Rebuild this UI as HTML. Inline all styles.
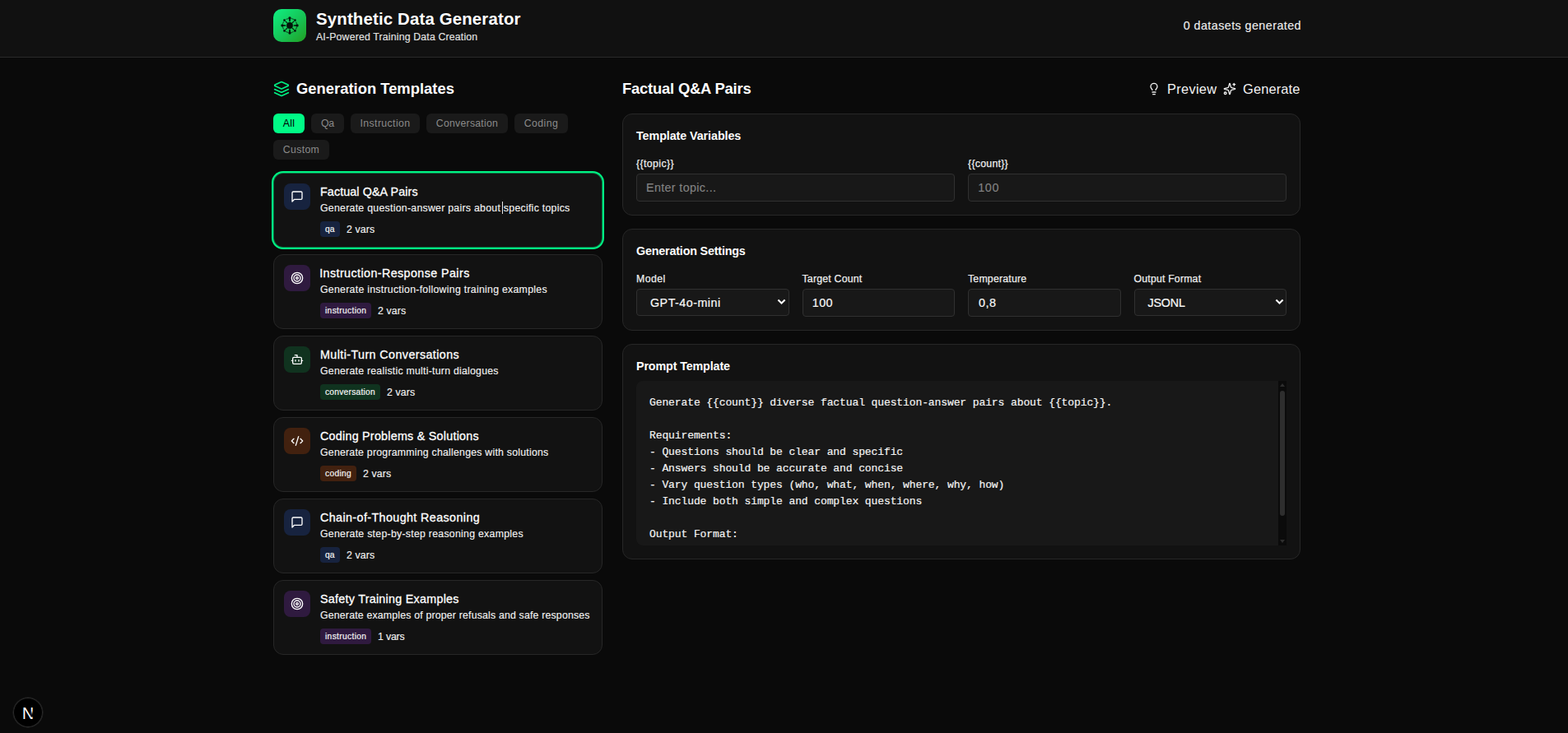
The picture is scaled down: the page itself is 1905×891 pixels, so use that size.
<!DOCTYPE html>
<html lang="en">
<head>
<meta charset="utf-8">
<title>Synthetic Data Generator</title>
<style>
*{box-sizing:border-box;margin:0;padding:0}
html,body{width:1905px;height:891px;overflow:hidden;background:#0a0a0a}
body{font-family:"Liberation Sans",Arial,sans-serif;color:#fff;position:relative;-webkit-font-smoothing:antialiased}
.abs{position:absolute}
span.t{display:inline-block;white-space:nowrap}
svg{display:block}
svg.ic{fill:none;stroke:currentColor;stroke-width:2;stroke-linecap:round;stroke-linejoin:round}

/* header */
#hdr{position:absolute;left:0;top:0;width:1905px;height:70px;background:#111111;border-bottom:1px solid #2a2a2a}
#logo{position:absolute;left:332px;top:11px;width:40px;height:40px;border-radius:10px;background:linear-gradient(135deg,#0ff083 0%,#16c456 55%,#229f22 100%)}
#logo svg{position:absolute;left:9px;top:9px}
#title{position:absolute;left:384px;top:9px;height:28px;line-height:28px;font-size:20.4px;font-weight:700}
#sub{position:absolute;left:384px;top:37px;height:16px;line-height:16px;font-size:12.3px;color:#e2e2e2;-webkit-text-stroke:0.15px #e2e2e2}
#cnt{position:absolute;right:324px;top:21px;height:20px;line-height:20px;font-size:14.3px;color:#ededed;-webkit-text-stroke:0.15px #ededed}

/* left column */
#lhead{position:absolute;left:332px;top:94px;height:28px;display:flex;align-items:center}
#lhead svg{color:#00f083;margin-right:8px}
#lhead .t{font-size:18.4px;font-weight:700;line-height:28px}
.fb{position:absolute;height:24px;border-radius:6px;background:#1a1a1a;color:#8a8a8a;font-size:12.3px;line-height:24px;text-align:center}
.fb.on{background:#00fb86;color:#000}

.card{position:absolute;left:332px;width:400px;height:91px;border:1px solid #272727;border-radius:12px;background:#121212}
.card.sel{border-color:rgba(0,240,130,.45);box-shadow:0 0 0 2px #00f384}
.card .ib{position:absolute;left:12px;top:12px;width:32px;height:32px;border-radius:8px;display:flex;align-items:center;justify-content:center;color:#fff}
.card .ct{position:absolute;left:56px;top:12px;height:20px;line-height:20px;font-size:14.3px;color:#fff;-webkit-text-stroke:0.3px #fff}
.card .cd{position:absolute;left:56px;top:34px;height:16px;line-height:16px;font-size:12.3px;color:#f0f0f0;-webkit-text-stroke:0.15px #f0f0f0}
.card .bd{position:absolute;left:56px;top:58px;height:19px;line-height:19px;font-size:10.2px;border-radius:4px;padding:0 0 0 6px;color:#f4f4f4;overflow:hidden;-webkit-text-stroke:0.2px #f4f4f4}
.card .vr{position:absolute;top:60px;height:16px;line-height:16px;font-size:12.3px;color:#f0f0f0;-webkit-text-stroke:0.15px #f0f0f0}
.qa{background:#17233f}.ins{background:#2f1a3f}.conv{background:#10331f}.cod{background:#42210f}

/* right column */
#rhead{position:absolute;left:756px;top:94px;height:28px;line-height:28px;font-size:18.4px;font-weight:700}
.rb{position:absolute;top:96px;height:24px;line-height:24px;font-size:16.4px;color:#f2f2f2;display:flex;align-items:center}
.rb svg{margin-right:8px}
.panel{position:absolute;left:756px;width:824px;border:1px solid #272727;border-radius:12px;background:#121212}
.panel h3{position:absolute;left:16px;top:16px;height:20px;line-height:20px;font-size:14.3px;font-weight:700}
.lb{position:absolute;top:52px;height:16px;line-height:16px;font-size:12.3px;color:#ededed;-webkit-text-stroke:0.25px #ededed}
.in{position:absolute;top:72px;height:34px;border:1px solid #303030;border-radius:4px;background:#181818;font-size:14.3px;line-height:32px;padding-left:12px;color:#f8f8f8;-webkit-text-stroke:0.2px #f8f8f8}
.in.ph{color:#828282;-webkit-text-stroke:0.15px #828282}
.in.sl{height:33px;line-height:33px;padding-left:16px}
.in.sl svg{position:absolute;right:2.5px;top:9px;color:#fff}
#ta{position:absolute;left:16px;top:44px;width:790px;height:200px;border-radius:8px 0 0 8px;background:#181818;overflow:hidden}
#ta pre{position:absolute;left:16px;top:17px;-webkit-text-stroke:0.2px #f3f3f3;font-family:"Liberation Mono","DejaVu Sans Mono",monospace;font-size:13px;letter-spacing:-0.1px;line-height:20px;color:#f3f3f3}
#sb{position:absolute;right:0;top:0;width:10px;height:200px;background:#0b0b0b}
#sb i{position:absolute;left:2px;top:12px;width:6px;height:152px;border-radius:3px;background:#2e2e2e}
#sb b{position:absolute;left:2px;width:0;height:0;border-left:3px solid transparent;border-right:3px solid transparent}
#sb b.u{top:3px;border-bottom:4px solid #2e2e2e}
#sb b.d{bottom:3px;border-top:4px solid #2e2e2e}

/* next badge */
#nb{position:absolute;left:16px;top:848px;width:36px;height:36px;border-radius:50%;background:#000;box-shadow:inset 0 0 0 1px #2a2a2a,0 0 0 0.5px #2a2a2a}
#nb svg{position:absolute;left:0;top:0}
#caret{position:absolute;left:610px;top:245px;width:1px;height:15px;background:#e8e8e8}
/*LS*/
#c1b{letter-spacing:0.100px}
#c1d{letter-spacing:0.277px}
#c1t{letter-spacing:0.108px}
#c1v{letter-spacing:0.114px}
#c2b{letter-spacing:0.359px}
#c2d{letter-spacing:0.278px}
#c2t{letter-spacing:0.418px;margin-left:-0.80px}
#c2v{letter-spacing:0.148px}
#c3b{letter-spacing:0.260px}
#c3d{letter-spacing:0.248px}
#c3t{letter-spacing:0.415px}
#c3v{letter-spacing:0.114px}
#c4b{letter-spacing:0.330px}
#c4d{letter-spacing:0.237px}
#c4t{letter-spacing:0.257px}
#c4v{letter-spacing:0.114px}
#c5b{letter-spacing:0.100px}
#c5d{letter-spacing:0.275px}
#c5t{letter-spacing:0.404px}
#c5v{letter-spacing:0.114px}
#c6b{letter-spacing:0.359px}
#c6d{letter-spacing:0.191px}
#c6t{letter-spacing:0.276px}
#c6v{letter-spacing:-0.162px}
#f1{letter-spacing:0.200px}
#f2{letter-spacing:-0.100px}
#f3{letter-spacing:0.385px}
#f4{letter-spacing:0.233px}
#f5{letter-spacing:0.398px}
#f6{letter-spacing:0.328px}
#g1{letter-spacing:-0.171px}
#g2{letter-spacing:0.428px}
#g3{letter-spacing:0.210px}
#g4{letter-spacing:0.212px}
#g5{letter-spacing:0.190px}
#g6{letter-spacing:0.488px}
#g7{letter-spacing:0.450px}
#g8{letter-spacing:0.550px}
#g9{letter-spacing:-0.167px}
#p1{letter-spacing:-0.070px}
#p2{letter-spacing:0.396px}
#p3{letter-spacing:0.272px}
#p4{letter-spacing:0.360px}
#p5{letter-spacing:0.600px}
#q1{letter-spacing:-0.125px}
#r1{letter-spacing:-0.196px}
#r2{letter-spacing:0.304px}
#r3{letter-spacing:0.138px}
#t1{letter-spacing:0.160px}
#t2{letter-spacing:0.171px}
#t3{letter-spacing:0.447px}
#t4{letter-spacing:0.006px}
/*ENDLS*/
</style>
</head>
<body>

<div id="hdr">
  <div id="logo">
    <svg width="22" height="22" viewBox="-11 -11 22 22">
      <g stroke="#04140a" stroke-linecap="round" fill="none">
        <circle r="8.700" stroke-width="1.100" stroke-dasharray="3 3.833" stroke-dashoffset="-1.900" stroke-linecap="butt" opacity="0.65"/>
        <path d="M0 -5.400V-9M0 5.400V9M-5.400 0H-9M5.400 0H9" stroke-width="1.700"/>
        <path d="M3.300 -3.300L4.900 -4.900M-3.300 -3.300L-4.900 -4.900M3.300 3.300L4.900 4.900M-3.300 3.300L-4.900 4.900" stroke-width="1.150"/>
      </g>
      <g fill="#04140a">
        <circle r="3.900"/>
        <circle cx="0" cy="-9" r="1.700"/><circle cx="0" cy="9" r="1.700"/><circle cx="-9" cy="0" r="1.700"/><circle cx="9" cy="0" r="1.700"/>
        <circle cx="6.400" cy="-6.400" r="1.400"/><circle cx="-6.400" cy="-6.400" r="1.400"/><circle cx="6.400" cy="6.400" r="1.400"/><circle cx="-6.400" cy="6.400" r="1.400"/>
      </g>
    </svg>
  </div>
  <div id="title"><span class="t" id="t1">Synthetic Data Generator</span></div>
  <div id="sub"><span class="t" id="t2">AI-Powered Training Data Creation</span></div>
  <div id="cnt"><span class="t" id="t3">0 datasets generated</span></div>
</div>

<!-- LEFT -->
<div id="lhead">
  <svg class="ic" width="20" height="20" viewBox="0 0 24 24"><path d="m12.830 2.180a2 2 0 0 0-1.660 0L2.600 6.080a1 1 0 0 0 0 1.830l8.580 3.910a2 2 0 0 0 1.660 0l8.580-3.900a1 1 0 0 0 0-1.830Z"/><path d="m22 17.650-9.170 4.160a2 2 0 0 1-1.660 0L2 17.650"/><path d="m22 12.650-9.170 4.160a2 2 0 0 1-1.660 0L2 12.650"/></svg>
  <span class="t" id="t4">Generation Templates</span>
</div>

<div class="fb on" style="left:332px;top:138px;width:38px"><span class="t" id="f1">All</span></div>
<div class="fb" style="left:378px;top:138px;width:40px"><span class="t" id="f2">Qa</span></div>
<div class="fb" style="left:426px;top:138px;width:84px"><span class="t" id="f3">Instruction</span></div>
<div class="fb" style="left:518px;top:138px;width:99px"><span class="t" id="f4">Conversation</span></div>
<div class="fb" style="left:625px;top:138px;width:65px"><span class="t" id="f5">Coding</span></div>
<div class="fb" style="left:332px;top:170px;width:68px"><span class="t" id="f6">Custom</span></div>

<div class="card sel" style="top:210px">
  <div class="ib qa"><svg class="ic" width="16" height="16" viewBox="0 0 24 24"><path d="M21 15a2 2 0 0 1-2 2H7l-4 4V5a2 2 0 0 1 2-2h14a2 2 0 0 1 2 2z"/></svg></div>
  <div class="ct"><span class="t" id="c1t">Factual Q&amp;A Pairs</span></div>
  <div class="cd"><span class="t" id="c1d">Generate question-answer pairs about specific topics</span></div>
  <div class="bd qa" style="width:24px"><span class="t" id="c1b">qa</span></div>
  <div class="vr" style="left:88px"><span class="t" id="c1v">2 vars</span></div>
</div>

<div class="card" style="top:309px">
  <div class="ib ins"><svg class="ic" width="16" height="16" viewBox="0 0 24 24"><circle cx="12" cy="12" r="10"/><circle cx="12" cy="12" r="6"/><circle cx="12" cy="12" r="2"/></svg></div>
  <div class="ct"><span class="t" id="c2t">Instruction-Response Pairs</span></div>
  <div class="cd"><span class="t" id="c2d">Generate instruction-following training examples</span></div>
  <div class="bd ins" style="width:62px"><span class="t" id="c2b">instruction</span></div>
  <div class="vr" style="left:126px"><span class="t" id="c2v">2 vars</span></div>
</div>

<div class="card" style="top:408px">
  <div class="ib conv"><svg class="ic" width="16" height="16" viewBox="0 0 24 24"><path d="M12 8V4H8"/><rect width="16" height="12" x="4" y="8" rx="2"/><path d="M2 14h2"/><path d="M20 14h2"/><path d="M15 13v2"/><path d="M9 13v2"/></svg></div>
  <div class="ct"><span class="t" id="c3t">Multi-Turn Conversations</span></div>
  <div class="cd"><span class="t" id="c3d">Generate realistic multi-turn dialogues</span></div>
  <div class="bd conv" style="width:73px"><span class="t" id="c3b">conversation</span></div>
  <div class="vr" style="left:137px"><span class="t" id="c3v">2 vars</span></div>
</div>

<div class="card" style="top:507px">
  <div class="ib cod"><svg class="ic" width="16" height="16" viewBox="0 0 24 24"><path d="m18 16 4-4-4-4"/><path d="m6 8-4 4 4 4"/><path d="m14.500 4-5 16"/></svg></div>
  <div class="ct"><span class="t" id="c4t">Coding Problems &amp; Solutions</span></div>
  <div class="cd"><span class="t" id="c4d">Generate programming challenges with solutions</span></div>
  <div class="bd cod" style="width:44px"><span class="t" id="c4b">coding</span></div>
  <div class="vr" style="left:108px"><span class="t" id="c4v">2 vars</span></div>
</div>

<div class="card" style="top:606px">
  <div class="ib qa"><svg class="ic" width="16" height="16" viewBox="0 0 24 24"><path d="M21 15a2 2 0 0 1-2 2H7l-4 4V5a2 2 0 0 1 2-2h14a2 2 0 0 1 2 2z"/></svg></div>
  <div class="ct"><span class="t" id="c5t">Chain-of-Thought Reasoning</span></div>
  <div class="cd"><span class="t" id="c5d">Generate step-by-step reasoning examples</span></div>
  <div class="bd qa" style="width:24px"><span class="t" id="c5b">qa</span></div>
  <div class="vr" style="left:88px"><span class="t" id="c5v">2 vars</span></div>
</div>

<div class="card" style="top:705px">
  <div class="ib ins"><svg class="ic" width="16" height="16" viewBox="0 0 24 24"><circle cx="12" cy="12" r="10"/><circle cx="12" cy="12" r="6"/><circle cx="12" cy="12" r="2"/></svg></div>
  <div class="ct"><span class="t" id="c6t">Safety Training Examples</span></div>
  <div class="cd"><span class="t" id="c6d">Generate examples of proper refusals and safe responses</span></div>
  <div class="bd ins" style="width:62px"><span class="t" id="c6b">instruction</span></div>
  <div class="vr" style="left:126px"><span class="t" id="c6v">1 vars</span></div>
</div>

<div id="caret"></div>

<!-- RIGHT -->
<div id="rhead"><span class="t" id="r1">Factual Q&amp;A Pairs</span></div>
<div class="rb" style="left:1394px">
  <svg class="ic" width="16" height="16" viewBox="0 0 24 24"><path d="M15 14c.2-1 .7-1.700 1.500-2.500 1-.9 1.500-2.200 1.500-3.500A6 6 0 0 0 6 8c0 1 .2 2.200 1.500 3.500.7.700 1.300 1.500 1.500 2.500"/><path d="M9 18h6"/><path d="M10 22h4"/></svg>
  <span class="t" id="r2">Preview</span>
</div>
<div class="rb" style="left:1486px">
  <svg class="ic" width="16" height="16" viewBox="0 0 24 24"><path d="M9.937 15.500A2 2 0 0 0 8.500 14.063l-6.135-1.582a.5.5 0 0 1 0-.962L8.500 9.936A2 2 0 0 0 9.937 8.500l1.582-6.135a.5.5 0 0 1 .963 0L14.063 8.500A2 2 0 0 0 15.500 9.937l6.135 1.581a.5.5 0 0 1 0 .964L15.500 14.063a2 2 0 0 0-1.437 1.437l-1.582 6.135a.5.5 0 0 1-.963 0z"/><path d="M20 2v4"/><path d="M22 4h-4"/><circle cx="4" cy="20" r="2"/></svg>
  <span class="t" id="r3">Generate</span>
</div>

<div class="panel" style="top:138px;height:124px">
  <h3><span class="t" id="p1">Template Variables</span></h3>
  <div class="lb" style="left:16px"><span class="t" id="p2">{{topic}}</span></div>
  <div class="lb" style="left:419px"><span class="t" id="p3">{{count}}</span></div>
  <div class="in ph" style="left:16px;width:387px;padding-left:11px"><span class="t" id="p4">Enter topic...</span></div>
  <div class="in ph" style="left:419px;width:387px;padding-left:11.3px"><span class="t" id="p5">100</span></div>
</div>

<div class="panel" style="top:278px;height:124px">
  <h3><span class="t" id="g1">Generation Settings</span></h3>
  <div class="lb" style="left:16px"><span class="t" id="g2">Model</span></div>
  <div class="lb" style="left:217.5px"><span class="t" id="g3">Target Count</span></div>
  <div class="lb" style="left:419px"><span class="t" id="g4">Temperature</span></div>
  <div class="lb" style="left:620.5px"><span class="t" id="g5">Output Format</span></div>
  <div class="in sl" style="left:16px;width:185.5px"><span class="t" id="g6">GPT-4o-mini</span><svg class="ic" width="11" height="11" viewBox="0 0 24 24" style="stroke-width:4.4;stroke-linecap:butt;stroke-linejoin:miter"><path d="m3 7.500 9 9 9-9"/></svg></div>
  <div class="in" style="left:217.5px;width:185.5px;padding-left:11.3px"><span class="t" id="g7">100</span></div>
  <div class="in" style="left:419px;width:185.5px"><span class="t" id="g8">0,8</span></div>
  <div class="in sl" style="left:620.5px;width:185.5px"><span class="t" id="g9">JSONL</span><svg class="ic" width="11" height="11" viewBox="0 0 24 24" style="stroke-width:4.4;stroke-linecap:butt;stroke-linejoin:miter"><path d="m3 7.500 9 9 9-9"/></svg></div>
</div>

<div class="panel" style="top:418px;height:262px">
  <h3><span class="t" id="q1">Prompt Template</span></h3>
  <div id="ta">
<pre>Generate {{count}} diverse factual question-answer pairs about {{topic}}.

Requirements:
- Questions should be clear and specific
- Answers should be accurate and concise
- Vary question types (who, what, when, where, why, how)
- Include both simple and complex questions

Output Format:
{"question": "...", "answer": "..."}</pre>
    <div id="sb"><b class="u"></b><i></i><b class="d"></b></div>
  </div>
</div>

<div id="nb">
  <svg width="36" height="36" viewBox="0 0 36 36">
    <defs><linearGradient id="ng" x1="0" y1="0" x2="0" y2="1"><stop offset="0" stop-color="#000" stop-opacity="0"/><stop offset="0.55" stop-color="#000" stop-opacity="0.9"/><stop offset="1" stop-color="#000" stop-opacity="1"/></linearGradient></defs>
    <text x="18" y="25.6" text-anchor="middle" font-family="Liberation Sans, Arial, sans-serif" font-size="19.5" fill="#fff">N</text>
    <rect x="21.500" y="16" width="4" height="7.500" fill="url(#ng)"/>
  </svg>
</div>

</body>
</html>
